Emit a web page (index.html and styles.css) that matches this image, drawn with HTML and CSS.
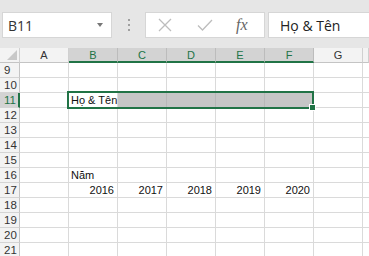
FILE: index.html
```html
<!DOCTYPE html>
<html lang="vi">
<head>
    <meta charset="UTF-8">
    <title>Sheet</title>
    <link rel="stylesheet" href="styles.css">
</head>
<body>
<div class="bar">
    <div class="namebox">
        <span>B11</span>
        <span class="arrow"></span>
    </div>
    <div class="dots"><i></i><i></i><i></i></div>
    <div class="tools">
        <svg width="16" height="14" viewBox="0 0 16 14"><path d="M2 1 L14 13 M14 1 L2 13" stroke="#bdbdbd" stroke-width="1.3" fill="none"/></svg>
        <svg width="16" height="14" viewBox="0 0 16 14"><path d="M1 7.5 L5.5 12 L15 2" stroke="#bdbdbd" stroke-width="1.3" fill="none"/></svg>
        <span class="fx">fx</span>
    </div>
    <div class="formula">Họ &amp; Tên</div>
</div>
<div class="sheet">
    <div class="corner"><span></span></div>
    <div class="ch">A</div>
    <div class="ch sel">B</div>
    <div class="ch sel">C</div>
    <div class="ch sel">D</div>
    <div class="ch sel">E</div>
    <div class="ch sel">F</div>
    <div class="ch">G</div>
    <div class="ch last"></div>

    <div class="rh">9</div><div class="c"></div><div class="c"></div><div class="c"></div><div class="c"></div><div class="c"></div><div class="c"></div><div class="c"></div><div class="c last"></div>
    <div class="rh">10</div><div class="c"></div><div class="c"></div><div class="c"></div><div class="c"></div><div class="c"></div><div class="c"></div><div class="c"></div><div class="c last"></div>
    <div class="rh rsel">11</div><div class="c"></div><div class="c">Họ &amp; Tên</div><div class="c hl"></div><div class="c hl"></div><div class="c hl"></div><div class="c hl"></div><div class="c"></div><div class="c last"></div>
    <div class="rh">12</div><div class="c"></div><div class="c"></div><div class="c"></div><div class="c"></div><div class="c"></div><div class="c"></div><div class="c"></div><div class="c last"></div>
    <div class="rh">13</div><div class="c"></div><div class="c"></div><div class="c"></div><div class="c"></div><div class="c"></div><div class="c"></div><div class="c"></div><div class="c last"></div>
    <div class="rh">14</div><div class="c"></div><div class="c"></div><div class="c"></div><div class="c"></div><div class="c"></div><div class="c"></div><div class="c"></div><div class="c last"></div>
    <div class="rh">15</div><div class="c"></div><div class="c"></div><div class="c"></div><div class="c"></div><div class="c"></div><div class="c"></div><div class="c"></div><div class="c last"></div>
    <div class="rh">16</div><div class="c"></div><div class="c">Năm</div><div class="c"></div><div class="c"></div><div class="c"></div><div class="c"></div><div class="c"></div><div class="c last"></div>
    <div class="rh">17</div><div class="c"></div><div class="c num">2016</div><div class="c num">2017</div><div class="c num">2018</div><div class="c num">2019</div><div class="c num">2020</div><div class="c"></div><div class="c last"></div>
    <div class="rh">18</div><div class="c"></div><div class="c"></div><div class="c"></div><div class="c"></div><div class="c"></div><div class="c"></div><div class="c"></div><div class="c last"></div>
    <div class="rh">19</div><div class="c"></div><div class="c"></div><div class="c"></div><div class="c"></div><div class="c"></div><div class="c"></div><div class="c"></div><div class="c last"></div>
    <div class="rh">20</div><div class="c"></div><div class="c"></div><div class="c"></div><div class="c"></div><div class="c"></div><div class="c"></div><div class="c"></div><div class="c last"></div>
    <div class="rh">21</div><div class="c"></div><div class="c"></div><div class="c"></div><div class="c"></div><div class="c"></div><div class="c"></div><div class="c"></div><div class="c last"></div>

    <div class="selection"><span class="handle"></span></div>
</div>
</body>
</html>
```

FILE: styles.css
```css
html, body {
    margin: 0;
    width: 100%;
    height: 100%;
    overflow: hidden;
    background: #fff;
    font-family: "Liberation Sans", Arial, sans-serif;
}
.bar {
    height: 48px;
    box-sizing: border-box;
    padding: 12px 0 0 2px;
    background: #e6e6e6;
    display: flex;
    align-items: flex-start;
}
.namebox {
    width: 110px;
    height: 26px;
    box-sizing: border-box;
    background: #fff;
    border: 1px solid #d6d6d6;
    display: flex;
    align-items: center;
    justify-content: space-between;
    padding: 0 8px 0 5px;
    font-family: "Open Sans", "Noto Sans", sans-serif;
    font-size: 14px;
    color: #333;
}
.arrow {
    width: 0;
    height: 0;
    border-left: 3.5px solid transparent;
    border-right: 3.5px solid transparent;
    border-top: 4px solid #777;
}
.dots {
    width: 33px;
    height: 26px;
    display: flex;
    flex-direction: column;
    align-items: center;
    justify-content: center;
    gap: 3px;
}
.dots i {
    display: block;
    width: 2px;
    height: 2px;
    background: #a0a0a0;
}
.tools {
    width: 120px;
    height: 26px;
    box-sizing: border-box;
    background: #fff;
    border: 1px solid #d6d6d6;
    display: flex;
    align-items: center;
    padding-left: 11px;
    gap: 24px;
}
.fx {
    font-family: "Liberation Serif", "DejaVu Serif", serif;
    font-style: italic;
    font-size: 16px;
    color: #666;
    margin-left: -1px;
}
.formula {
    flex: 1;
    margin-left: 3px;
    height: 26px;
    box-sizing: border-box;
    background: #fff;
    border: 1px solid #d6d6d6;
    border-right: none;
    padding-left: 11px;
    display: flex;
    align-items: center;
    font-family: "Open Sans", "Noto Sans", sans-serif;
    font-size: 14px;
    color: #222;
}
.sheet {
    position: relative;
    display: grid;
    grid-template-columns: 20px repeat(7, 49px) 1fr;
    grid-template-rows: 15px;
    grid-auto-rows: 15px;
    font-size: 11px;
}
.sheet > div {
    box-sizing: border-box;
}
.corner {
    background: #f3f3f3;
    border-right: 1px solid #d0d0d0;
    border-bottom: 1px solid #c4c4c4;
    position: relative;
}
.corner span {
    position: absolute;
    right: 2px;
    bottom: 2px;
    width: 0;
    height: 0;
    border-left: 10px solid transparent;
    border-bottom: 10px solid #c8c8c8;
}
.ch {
    background: #f3f3f3;
    border-right: 1px solid #d0d0d0;
    border-bottom: 1px solid #c4c4c4;
    text-align: center;
    line-height: 14px;
    color: #333;
}
.ch.sel {
    background: #d3d3d3;
    border-right-color: #bcbcbc;
    border-bottom: 2px solid #217346;
    color: #217346;
}
.rh {
    background: #f3f3f3;
    border-right: 1px solid #c4c4c4;
    border-bottom: 1px solid #d4d4d4;
    padding-left: 4px;
    line-height: 14px;
    color: #333;
    font-size: 11.5px;
}
.rh.rsel {
    background: #d3d3d3;
    border-right: 2px solid #217346;
    color: #217346;
}
.c {
    border-right: 1px solid #dadada;
    border-bottom: 1px solid #dadada;
    padding: 0 2px;
    line-height: 14px;
    color: #111;
    white-space: nowrap;
}
.c.last {
    border-right: none;
}
.c.hl {
    background: #c6c6c6;
    border-right-color: #b8b8b8;
}
.c.num {
    text-align: right;
    padding-right: 3px;
}
.selection {
    position: absolute;
    left: 67px;
    top: 43px;
    width: 247px;
    height: 18px;
    box-sizing: border-box;
    border: 2px solid #217346;
}
.handle {
    position: absolute;
    right: -4px;
    bottom: -4px;
    width: 5px;
    height: 5px;
    background: #217346;
    border: 1px solid #fff;
}
```
